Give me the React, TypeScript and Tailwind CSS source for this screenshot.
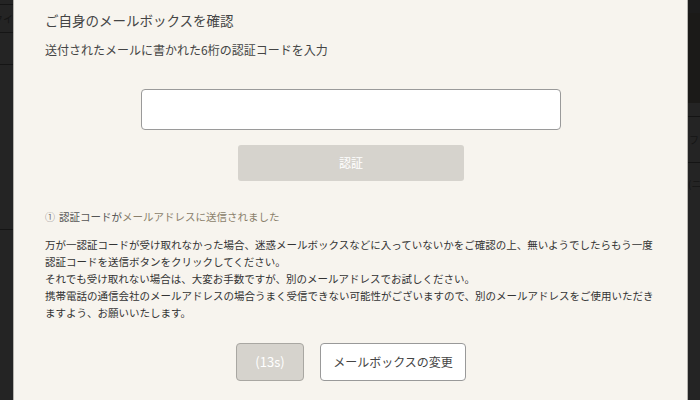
import React from 'react';

const jp = { fontFamily: '"Noto Sans CJK JP", "Noto Sans", sans-serif' };

function LeftStrip() {
  return (
    <div className="w-[13px] shrink-0 bg-[#242424] flex flex-col overflow-hidden">
      <div className="h-[5px] border-b border-[#151515]" />
      <div className="h-[28px] border-b border-[#151515] flex items-center justify-end text-[10px] text-[#141414] whitespace-nowrap">
        クイ
      </div>
      <div className="h-[32px] border-b border-[#151515]" />
      <div className="h-[165px] border-b border-[#151515]" />
      <div className="flex-1" />
    </div>
  );
}

function RightStrip() {
  return (
    <div className="w-[12px] shrink-0 bg-[#242424] flex flex-col overflow-hidden">
      <div className="h-[13px] bg-[#1c1c1c]" />
      <div className="h-[90px] bg-[#1b1a18]" />
      <div className="h-[14px] border-b border-[#141414]" />
      <div className="h-[46px] border-b border-[#141414] flex items-center text-[10px] text-[#151515] pl-[1px]">
        フ
      </div>
      <div className="h-[40px] flex items-center text-[10px] text-[#151515]">(ニ</div>
      <div className="flex-1" />
    </div>
  );
}

export default function App() {
  return (
    <div className="w-[700px] h-[400px] flex overflow-hidden bg-[#242424]" style={jp}>
      <LeftStrip />
      <div className="w-[675px] shrink-0 bg-[#f7f4ee] border-l border-r border-[#b5b3ae] flex flex-col pl-[31px] pr-[30px]">
        <h2 className="mt-[11px] text-[13.5px] leading-[18px] text-[#444]">ご自身のメールボックスを確認</h2>
        <p className="mt-[12px] text-[12px] leading-[17px] text-[#444]">
          送付されたメールに書かれた6桁の認証コードを入力
        </p>

        <div className="mt-[31px] flex justify-center">
          <input
            type="text"
            className="w-[420px] h-[41px] bg-white border border-[#9a9a9a] rounded-[4px] outline-none px-3"
          />
        </div>
        <div className="mt-[15px] flex justify-center">
          <button className="w-[226px] h-[36px] bg-[#d6d3cd] rounded-[3px] text-white text-[12px]">認証</button>
        </div>

        <div className="mt-[28px] flex items-center text-[10.5px] leading-[16px] whitespace-nowrap">
          <span className="text-[#777] text-[10px] mr-[4px]">①</span>
          <span className="text-[#555]">認証コードが</span>
          <span className="text-[#8a7f6b]">メールアドレスに送信されました</span>
        </div>

        <p className="mt-[11px] text-[10.5px] leading-[17px] text-[#333] whitespace-nowrap">
          万が一認証コードが受け取れなかった場合、迷惑メールボックスなどに入っていないかをご確認の上、無いようでしたらもう一度
          <br />
          認証コードを送信ボタンをクリックしてください。
          <br />
          それでも受け取れない場合は、大変お手数ですが、別のメールアドレスでお試しください。
          <br />
          携帯電話の通信会社のメールアドレスの場合うまく受信できない可能性がございますので、別のメールアドレスをご使用いただき
          <br />
          ますよう、お願いいたします。
        </p>

        <div className="mt-[22px] flex justify-center gap-[16px]">
          <button className="w-[68px] h-[38px] bg-[#d6d3cd] border border-[#a9a7a2] rounded-[4px] text-white text-[13px]">
            (13s)
          </button>
          <button className="w-[146px] h-[38px] bg-white border border-[#999] rounded-[4px] text-[#444] text-[12px]">
            メールボックスの変更
          </button>
        </div>
      </div>
      <RightStrip />
    </div>
  );
}
